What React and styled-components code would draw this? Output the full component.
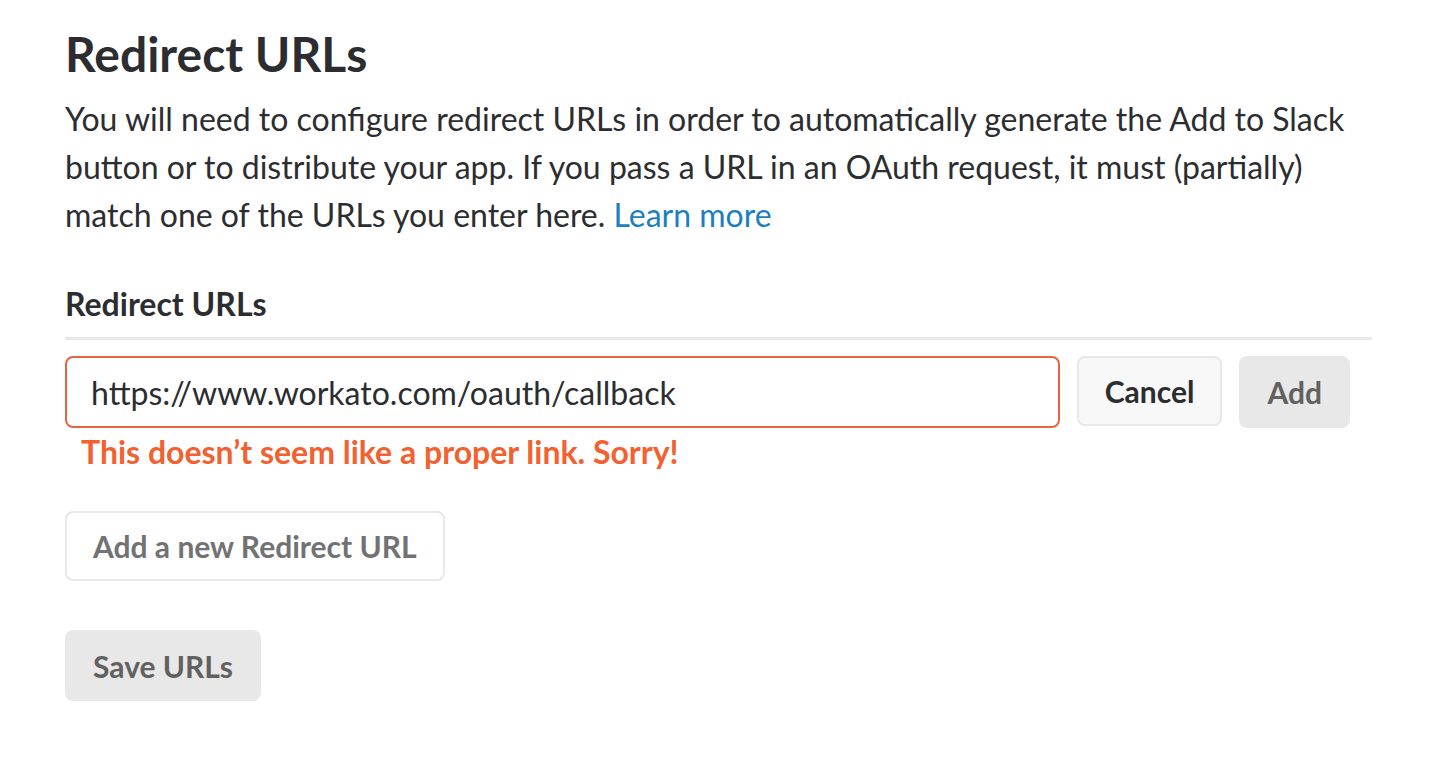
import React from "react";
import styled, { createGlobalStyle } from "styled-components";

const Global = createGlobalStyle`
  html, body { margin: 0; padding: 0; background: #ffffff; }
  body { font-family: Lato, "Noto Sans", sans-serif; color: #2c2d30; -webkit-font-smoothing: antialiased; }
`;

const Page = styled.div`
  padding: 24px 64px 40px 65px;
  width: 1307px;
`;

const Title = styled.h1`
  margin: 0;
  font-size: 48px;
  line-height: 60px;
  font-weight: 700;
  color: #2c2d30;
`;

const Intro = styled.p`
  margin: 11px 0 0;
  font-size: 32px;
  line-height: 48px;
  color: #2c2d30;
`;

const Link = styled.a`
  color: #1d7fbf;
  text-decoration: none;
`;

const Label = styled.h3`
  margin: 45px 0 0;
  font-size: 32px;
  line-height: 40px;
  font-weight: 700;
  padding-bottom: 13px;
  border-bottom: 3px solid #e8e8e8;
`;

const Row = styled.div`
  margin-top: 16px;
  display: flex;
  align-items: flex-start;
  gap: 17px;
  padding-right: 22px;
`;

const Input = styled.input`
  flex: 1;
  height: 72px;
  box-sizing: border-box;
  border: 2px solid #e8643f;
  border-radius: 8px;
  padding: 0 24px;
  font-family: inherit;
  font-size: 32px;
  color: #2c2d30;
  outline: none;
`;

const Button = styled.button`
  display: block;
  box-sizing: border-box;
  height: ${(p) => p.$h || 70}px;
  padding: 0 ${(p) => p.$px || 26}px;
  border-radius: 8px;
  font-family: inherit;
  font-size: 30px;
  font-weight: 700;
  cursor: pointer;
  border: 2px solid #e8e8e8;
  background: ${(p) =>
    p.$variant === "gray" ? "#e8e8e8" : p.$variant === "light" ? "#f8f8f8" : "#ffffff"};
  color: ${(p) =>
    p.$variant === "gray" ? "#616161" : p.$variant === "light" ? "#2c2d30" : "#717274"};
`;

const ErrorText = styled.div`
  margin: 4px 0 0 16px;
  font-size: 32px;
  line-height: 40px;
  font-weight: 700;
  color: #f26130;
`;

const Block = styled.div`
  margin-top: ${(p) => p.$mt}px;
`;

export default function App() {
  return (
    <Page>
      <Global />
      <Title>Redirect URLs</Title>
      <Intro>
        You will need to configure redirect URLs in order to automatically generate the Add to Slack
        button or to distribute your app. If you pass a URL in an OAuth request, it must (partially)
        match one of the URLs you enter here. <Link href="#">Learn more</Link>
      </Intro>
      <Label>Redirect URLs</Label>
      <Row>
        <Input defaultValue="https://www.workato.com/oauth/callback" />
        <Button $variant="light">Cancel</Button>
        <Button $variant="gray" $h={72}>Add</Button>
      </Row>
      <ErrorText>This doesn’t seem like a proper link. Sorry!</ErrorText>
      <Block $mt={39}>
        <Button>Add a new Redirect URL</Button>
      </Block>
      <Block $mt={49}>
        <Button $variant="gray" $h={71}>Save URLs</Button>
      </Block>
    </Page>
  );
}
